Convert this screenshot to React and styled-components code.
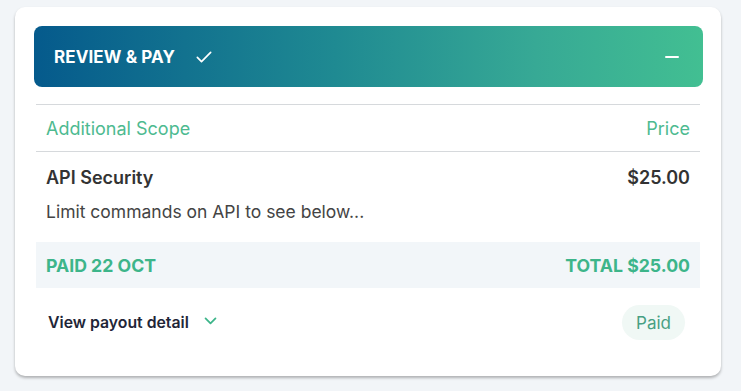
import React from 'react';
import styled, { createGlobalStyle } from 'styled-components';

const Global = createGlobalStyle`
  body {
    margin: 0;
    background: #f2f5f8;
    font-family: 'Inter', 'Noto Sans', sans-serif;
  }
`;

const Page = styled.div`
  padding: 7px 20px 16px 15px;
`;

const Card = styled.div`
  width: 706px;
  box-sizing: border-box;
  background: #fff;
  border-radius: 10px;
  box-shadow: 0 2px 3px rgba(0, 0, 0, 0.28);
  padding: 19px 18px 36px 19px;
`;

const Header = styled.div`
  height: 61px;
  border-radius: 8px;
  background: linear-gradient(90deg, #055a8c 0%, #1f8a92 45%, #37a995 75%, #42bf92 100%);
  display: flex;
  align-items: center;
  padding: 0 24px 0 20px;
  color: #fff;
`;

const Title = styled.div`
  font-size: 17px;
  font-weight: 700;
  letter-spacing: 0.1px;
`;

const Check = styled.svg`
  margin-left: 19px;
  width: 20px;
  height: 20px;
`;

const Minus = styled.div`
  margin-left: auto;
  width: 14px;
  height: 2px;
  background: #fff;
  border-radius: 1px;
`;

const Body = styled.div`
  margin: 17px 3px 0 2px;
`;

const Row = styled.div`
  display: flex;
  justify-content: space-between;
  align-items: center;
  padding: 0 10px;
  height: ${p => p.$h || 46}px;
  border-top: ${p => (p.$line ? '1px solid #d6d9dc' : 'none')};
  border-bottom: ${p => (p.$lineBottom ? '1px solid #d6d9dc' : 'none')};
  background: ${p => p.$bg || 'transparent'};
  color: ${p => p.$color || '#333'};
  font-size: ${p => p.$size || 18}px;
  font-weight: ${p => p.$weight || 400};
`;

const Item = styled.div`
  padding: 15px 10px 0;
`;

const ItemTop = styled.div`
  display: flex;
  justify-content: space-between;
  font-size: 18px;
  font-weight: 600;
  color: #333;
`;

const Desc = styled.div`
  margin-top: 13px;
  font-size: 17.5px;
  color: #444;
  padding-bottom: 20px;
`;

const Footer = styled.div`
  display: flex;
  align-items: center;
  justify-content: space-between;
  margin-top: 17px;
  padding: 0 15px 0 12px;
`;

const Toggle = styled.div`
  display: flex;
  align-items: center;
  font-size: 15.8px;
  font-weight: 600;
  color: #1f2638;
`;

const Chevron = styled.svg`
  margin-left: 13px;
  width: 17px;
  height: 17px;
  margin-top: -4px;
`;

const Pill = styled.div`
  height: 35px;
  padding: 0 14px;
  border-radius: 18px;
  background: #f0f8f5;
  color: #47a083;
  font-size: 17px;
  display: flex;
  align-items: center;
`;

export default function App() {
  return (
    <Page>
      <Global />
      <Card>
        <Header>
          <Title>REVIEW &amp; PAY</Title>
          <Check viewBox="0 0 24 24" fill="none" stroke="#fff" strokeWidth="2" strokeLinecap="round" strokeLinejoin="round">
            <path d="M4 12.5l5 5L20 6.5" />
          </Check>
          <Minus />
        </Header>
        <Body>
          <Row $line $lineBottom $h={46} $color="#4dba90">
            <span>Additional Scope</span>
            <span>Price</span>
          </Row>
          <Item>
            <ItemTop>
              <span>API Security</span>
              <span>$25.00</span>
            </ItemTop>
            <Desc>Limit commands on API to see below...</Desc>
          </Item>
          <Row $h={46} $bg="#f2f6f9" $color="#3db58a" $weight={700} $size={17.7}>
            <span>PAID 22 OCT</span>
            <span>TOTAL $25.00</span>
          </Row>
          <Footer>
            <Toggle>
              View payout detail
              <Chevron viewBox="0 0 24 24" fill="none" stroke="#3db58a" strokeWidth="2.5" strokeLinecap="round" strokeLinejoin="round">
                <path d="M5 9l7 7 7-7" />
              </Chevron>
            </Toggle>
            <Pill>Paid</Pill>
          </Footer>
        </Body>
      </Card>
    </Page>
  );
}
